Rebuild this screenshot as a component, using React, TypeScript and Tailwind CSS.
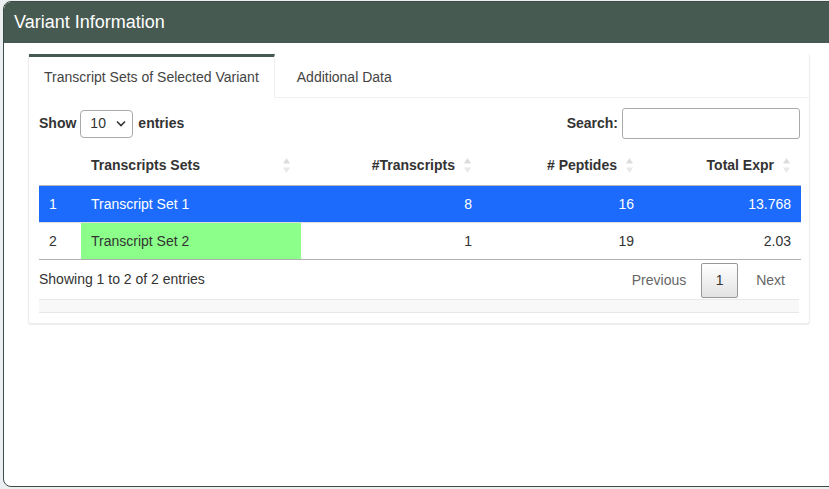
import React from "react";

function SortIcon() {
  return (
    <svg className="absolute right-[10px] top-[12px]" width="9" height="17" viewBox="0 0 9 17">
      <path d="M4.5 1 L8 6.5 L1 6.5 Z" fill="#dcdcdc" />
      <path d="M4.5 16 L8 10.5 L1 10.5 Z" fill="#e8e8e8" />
    </svg>
  );
}

export default function App() {
  return (
    <div className="w-[829px] h-[489px] overflow-hidden bg-[#eceff1] font-['Liberation_Sans',Arial,sans-serif] text-[14px] text-[#333]">
      <div className="ml-[3px] mt-[1px] w-[860px] h-[486px] bg-white border border-[#3d4c46] rounded-[8px] overflow-hidden flex flex-col">
        <div className="h-[41px] shrink-0 bg-[#475a52] text-white text-[18px] pl-[10px] flex items-center">
          Variant Information
        </div>
        <div className="pl-[24px] pt-[11px]">
          <div className="w-[782px] bg-white rounded-[3px] border border-[#ededed] border-t-0 shadow-[0_1px_1px_rgba(0,0,0,0.08)]">
            <div className="flex border-b border-[#f0f0f0]">
              <div className="border-t-[3px] border-[#475a52] bg-white px-[15px] py-[10px] leading-[20px] border-r border-r-[#f0f0f0] -mb-px text-[#444]">
                Transcript Sets of Selected Variant
              </div>
              <div className="ml-[7px] border-t-[3px] border-transparent px-[15px] py-[10px] leading-[20px] text-[#444]">
                Additional Data
              </div>
            </div>
            <div className="p-[10px]">
              <div className="flex justify-between items-center h-[31px]">
                <div className="flex items-center font-bold">
                  <span>Show</span>
                  <div className="ml-[4px] w-[53px] h-[28px] border border-[#aaa] rounded-[4px] flex items-center justify-between pl-[9px] pr-[6px] font-normal">
                    <span>10</span>
                    <svg width="10" height="7" viewBox="0 0 10 7">
                      <path d="M1 1.5 L5 5.5 L9 1.5" stroke="#333" strokeWidth="1.6" fill="none" />
                    </svg>
                  </div>
                  <span className="ml-[5px]">entries</span>
                </div>
                <div className="flex items-center font-bold">
                  <span>Search:</span>
                  <div className="ml-[4px] mr-[-1px] w-[178px] h-[31px] border border-[#aaa] rounded-[3px]" />
                </div>
              </div>
              <table className="mt-[6px] w-[762px] border-collapse table-fixed">
                <colgroup>
                  <col className="w-[42px]" />
                  <col className="w-[220px]" />
                  <col className="w-[181px]" />
                  <col className="w-[162px]" />
                  <col className="w-[157px]" />
                </colgroup>
                <thead>
                  <tr className="border-b border-[#b8b8b8]">
                    <th className="py-[10px] pl-[10px] leading-[20px] font-bold text-left"></th>
                    <th className="relative py-[10px] pl-[10px] pr-[18px] leading-[20px] font-bold text-left">
                      Transcripts Sets
                      <SortIcon />
                    </th>
                    <th className="relative py-[10px] pl-[10px] pr-[27px] leading-[20px] font-bold text-right">
                      #Transcripts
                      <SortIcon />
                    </th>
                    <th className="relative py-[10px] pl-[10px] pr-[27px] leading-[20px] font-bold text-right">
                      # Peptides
                      <SortIcon />
                    </th>
                    <th className="relative py-[10px] pl-[10px] pr-[27px] leading-[20px] font-bold text-right">
                      Total Expr
                      <SortIcon />
                    </th>
                  </tr>
                </thead>
                <tbody>
                  <tr className="bg-[#1c6bfc] text-white">
                    <td className="py-[8px] px-[10px] leading-[20px]">1</td>
                    <td className="py-[8px] px-[10px] leading-[20px]">Transcript Set 1</td>
                    <td className="py-[8px] px-[10px] leading-[20px] text-right">8</td>
                    <td className="py-[8px] px-[10px] leading-[20px] text-right">16</td>
                    <td className="py-[8px] px-[10px] leading-[20px] text-right">13.768</td>
                  </tr>
                  <tr className="border-t border-[#dddddd] border-b border-b-[#b0b0b0]">
                    <td className="py-[8px] px-[10px] leading-[20px]">2</td>
                    <td className="py-[8px] px-[10px] leading-[20px] bg-[#8cff8a]">Transcript Set 2</td>
                    <td className="py-[8px] px-[10px] leading-[20px] text-right">1</td>
                    <td className="py-[8px] px-[10px] leading-[20px] text-right">19</td>
                    <td className="py-[8px] px-[10px] leading-[20px] text-right">2.03</td>
                  </tr>
                </tbody>
              </table>
              <div className="flex justify-between">
                <div className="pt-[9px] leading-[20px]">Showing 1 to 2 of 2 entries</div>
                <div className="flex items-center pt-[3px]">
                  <div className="h-[35px] px-[14px] flex items-center text-[#666]">Previous</div>
                  <div className="ml-[1px] h-[35px] w-[37px] flex items-center justify-center border border-[#979797] rounded-[2px] bg-gradient-to-b from-white to-[#e2e2e2]">
                    1
                  </div>
                  <div className="ml-[4px] h-[35px] px-[14px] flex items-center text-[#666]">Next</div>
                </div>
              </div>
              <div className="mt-[1px] h-[14px] bg-[#f8f8f8] border-t border-b border-[#e8e8e8]" />
            </div>
          </div>
        </div>
      </div>
    </div>
  );
}
